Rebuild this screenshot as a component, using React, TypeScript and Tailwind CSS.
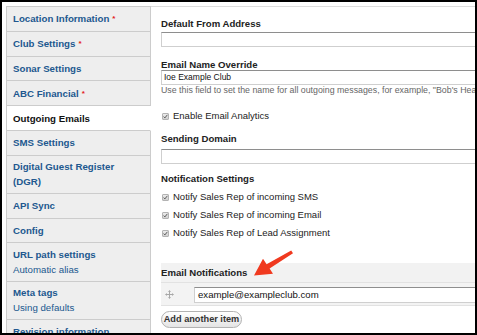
import React from 'react'

type Tab = { lines: string[]; req?: boolean; active?: boolean; sub?: string }

const tabs: Tab[] = [
  { lines: ['Location Information'], req: true },
  { lines: ['Club Settings'], req: true },
  { lines: ['Sonar Settings'] },
  { lines: ['ABC Financial'], req: true },
  { lines: ['Outgoing Emails'], active: true },
  { lines: ['SMS Settings'] },
  { lines: ['Digital Guest Register', '(DGR)'] },
  { lines: ['API Sync'] },
  { lines: ['Config'] },
  { lines: ['URL path settings'], sub: 'Automatic alias' },
  { lines: ['Meta tags'], sub: 'Using defaults' },
  { lines: ['Revision information'] },
]

function Checkbox() {
  return (
    <span className="w-[7px] h-[7px] mr-[4px] shrink-0 rounded-[1px] border border-[#b3b3b3] bg-gradient-to-b from-[#ececec] to-[#cfcfcf] flex items-center justify-center">
      <svg width="5" height="5" viewBox="0 0 5 5">
        <path d="M0.6 2.6 L1.9 3.9 L4.4 0.8" fill="none" stroke="#5a5a5a" strokeWidth="1" />
      </svg>
    </span>
  )
}

function CheckRow({ label, h = 'h-[18px]' }: { label: string; h?: string }) {
  return (
    <div className={`flex items-center ${h} pl-[1px] text-[9.5px] text-[#222]`}>
      <Checkbox />
      <span className="whitespace-nowrap">{label}</span>
    </div>
  )
}

function TextInput({ value }: { value?: string }) {
  return (
    <div className="w-[420px] h-[15px] shrink-0 border border-[#cfcfcf] border-t-[#8e8e8e] bg-white flex items-center pl-[2px] text-[8.5px] text-[#111]">
      {value}
    </div>
  )
}

function Label({ children, mt }: { children: React.ReactNode; mt: string }) {
  return <div className={`${mt} leading-[10px] h-[10px] text-[9.6px] font-bold text-[#222] whitespace-nowrap`}>{children}</div>
}

export default function App() {
  return (
    <div
      className="relative w-[477px] h-[335px] bg-black p-[2px] overflow-hidden"
      style={{ fontFamily: '"Liberation Sans", Arial, Helvetica, sans-serif' }}
    >
      <div className="bg-white h-full pl-[4px] pt-[4px] flex overflow-hidden">
        {/* vertical tabs */}
        <div className="w-[145px] shrink-0 flex flex-col border-l border-t border-[#cccccc]">
          {tabs.map(t => {
            const double = t.lines.length > 1 || !!t.sub
            return (
              <div
                key={t.lines[0]}
                className={`shrink-0 border-b border-[#cccccc] pl-[6px] pr-[6px] leading-[15px] text-[9.7px] ${
                  double ? 'py-[3.6px]' : 'py-[4.4px]'
                } ${t.active ? 'bg-white border-r border-r-white' : 'bg-[#eeeeee] border-r'}`}
              >
                {t.lines.map((l, i) => (
                  <div key={i} className={`font-bold whitespace-nowrap ${t.active ? 'text-[#111]' : 'text-[#21588f]'}`}>
                    {l}
                    {t.req && i === t.lines.length - 1 && <span className="text-[#e31b1b] ml-[3px] text-[8px] align-top">*</span>}
                  </div>
                ))}
                {t.sub && <div className="text-[#21588f] whitespace-nowrap">{t.sub}</div>}
              </div>
            )
          })}
        </div>

        {/* form pane */}
        <div className="flex-1 min-w-0 border-t border-[#dddddd] flex flex-col pl-[10px] overflow-hidden">
          <Label mt="mt-[12px]">Default From Address</Label>
          <div className="mt-[3px] flex"><TextInput /></div>

          <Label mt="mt-[13px]">Email Name Override</Label>
          <div className="flex"><TextInput value="Ioe Example Club" /></div>
          <div className="leading-[10px] text-[8.8px] text-[#666] whitespace-nowrap">
            Use this field to set the name for all outgoing messages, for example, "Bob's Health Club".
          </div>

          <div className="mt-[15px]"><CheckRow label="Enable Email Analytics" h="h-[12px]" /></div>

          <Label mt="mt-[12px]">Sending Domain</Label>
          <div className="mt-[5px] flex"><TextInput /></div>

          <Label mt="mt-[10px]">Notification Settings</Label>
          <div className="mt-[4px] flex flex-col">
            <CheckRow label="Notify Sales Rep of incoming SMS" />
            <CheckRow label="Notify Sales Rep of incoming Email" />
            <CheckRow label="Notify Sales Rep of Lead Assignment" />
          </div>

          <div className="mt-[21px] w-[420px] shrink-0 bg-[#f2f2f2]">
            <div className="h-[19px] flex items-center pt-[1px] text-[9.6px] font-bold text-[#222] whitespace-nowrap">Email Notifications</div>
            <div className="h-[24px] flex items-start border-t border-b border-[#e2e2e2] bg-[#f3f3f3]">
              <div className="w-[33px] h-full shrink-0 flex items-center pl-[4px]">
                <svg width="9" height="9" viewBox="0 0 9 9">
                  <path d="M4.5 0.5 V8.5 M0.5 4.5 H8.5" stroke="#a8a8a8" strokeWidth="1" />
                  <path d="M3 2 L4.5 0.3 L6 2 Z M3 7 L4.5 8.7 L6 7 Z M2 3 L0.3 4.5 L2 6 Z M7 3 L8.7 4.5 L7 6 Z" fill="#a8a8a8" />
                </svg>
              </div>
              <div className="mt-[4px] w-[380px] h-[16px] border border-[#cfcfcf] border-t-[#8e8e8e] bg-white flex items-center pl-[3px] text-[9.6px] text-[#111] whitespace-nowrap">
                example@exampleclub.com
              </div>
            </div>
          </div>

          <div className="mt-[5px] flex">
            <button className="h-[17px] w-[81px] rounded-[9px] border border-[#b2b2b2] bg-gradient-to-b from-white to-[#e4e4e4] text-[9.2px] font-bold text-[#333] whitespace-nowrap leading-none">
              Add another item
            </button>
          </div>
        </div>
      </div>

      {/* annotation arrow */}
      <svg className="absolute left-0 top-0 pointer-events-none" width="477" height="335" viewBox="0 0 477 335">
        <polygon
          points="254,275.5 273,273.8 269.6,268.6 293,253.3 291.2,250.5 266.6,264.3 263,258.8"
          fill="#f0391f"
        />
      </svg>
    </div>
  )
}
